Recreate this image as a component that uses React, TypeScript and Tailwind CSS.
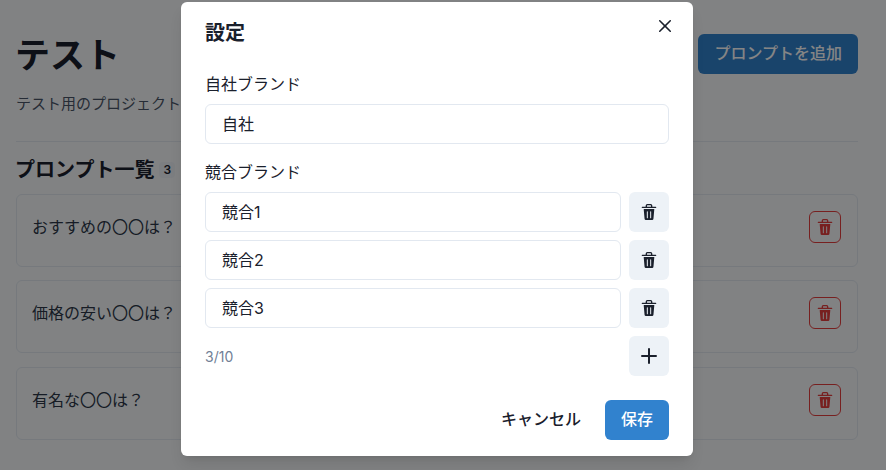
const font = "font-['Inter','Noto_Sans_CJK_JP',sans-serif]";

function DeleteIcon({ className }: { className?: string }) {
  return (
    <svg viewBox="0 0 24 24" className={className} fill="currentColor">
      <path d="M19.452 7.5H4.547a.5.5 0 00-.5.545l1.287 14.136A2 2 0 007.326 24h9.347a2 2 0 001.992-1.819L19.95 8.045a.5.5 0 00-.129-.382.5.5 0 00-.369-.163zm-9.2 13a.75.75 0 01-1.5 0v-9a.75.75 0 011.5 0zm5 0a.75.75 0 01-1.5 0v-9a.75.75 0 011.5 0zM22 4h-4.75a.25.25 0 01-.25-.25V2.5A2.5 2.5 0 0014.5 0h-5A2.5 2.5 0 007 2.5v1.25a.25.25 0 01-.25.25H2a1 1 0 000 2h20a1 1 0 000-2zM9 3.75V2.5a.5.5 0 01.5-.5h5a.5.5 0 01.5.5v1.25a.25.25 0 01-.25.25h-5.5A.25.25 0 019 3.75z" />
    </svg>
  );
}

function CloseIcon({ className }: { className?: string }) {
  return (
    <svg viewBox="0 0 24 24" className={className} fill="currentColor">
      <path d="M.439,21.44a1.5,1.5,0,0,0,2.122,2.121L11.823,14.3a.25.25,0,0,1,.354,0l9.262,9.263a1.5,1.5,0,1,0,2.122-2.121L14.3,12.177a.25.25,0,0,1,0-.354l9.263-9.262A1.5,1.5,0,0,0,21.439.44L12.177,9.7a.25.25,0,0,1-.354,0L2.561.44A1.5,1.5,0,0,0,.439,2.561L9.7,11.823a.25.25,0,0,1,0,.354Z" />
    </svg>
  );
}

function AddIcon({ className }: { className?: string }) {
  return (
    <svg viewBox="0 0 24 24" className={className} fill="currentColor">
      <path d="M0,12a1.5,1.5,0,0,0,1.5,1.5h8.75a.25.25,0,0,1,.25.25V22.5a1.5,1.5,0,0,0,3,0V13.75a.25.25,0,0,1,.25-.25H22.5a1.5,1.5,0,0,0,0-3H13.75a.25.25,0,0,1-.25-.25V1.5a1.5,1.5,0,0,0-3,0v8.75a.25.25,0,0,1-.25.25H1.5A1.5,1.5,0,0,0,0,12Z" />
    </svg>
  );
}

const prompts = ["おすすめの〇〇は？", "価格の安い〇〇は？", "有名な〇〇は？"];
const competitors = ["競合1", "競合2", "競合3"];

function TextInput({ value }: { value: string }) {
  return (
    <input
      readOnly
      value={value}
      className="h-10 w-full min-w-0 flex-1 rounded-md border border-[#e2e8f0] bg-white px-4 pb-[3px] text-base text-[#1a202c] outline-none"
    />
  );
}

function GrayIconButton({ children }: { children: React.ReactNode }) {
  return (
    <button className="flex h-10 w-10 shrink-0 items-center justify-center rounded-md bg-[#edf2f7] text-[#1a202c]">
      {children}
    </button>
  );
}

export default function App() {
  return (
    <div className={`${font} relative h-[470px] w-[886px] overflow-hidden bg-[#f7fafc] text-[#1a202c]`}>
      <div className="w-[874px] px-4 pt-[34px]">
        <div className="flex h-10 items-center justify-between">
          <h1 className="-ml-px pt-[3px] text-[35px] font-semibold">テスト</h1>
          <button className="h-10 rounded-md bg-[#3182ce] px-4 pb-[2px] text-base font-medium text-white">
            プロンプトを追加
          </button>
        </div>
        <p className="mt-[18px] text-[15px] leading-6 text-[#4a5568]">テスト用のプロジェクトです</p>
        <div className="mt-[25px] h-px bg-[#e2e8f0]" />
        <div className="mt-[13px] -ml-px flex items-center gap-[5px]">
          <h2 className="text-xl leading-[30px] font-semibold">プロンプト一覧</h2>
          <span className="rounded-sm bg-[#edf2f7] px-1 text-xs font-semibold">3</span>
        </div>
        <div className="mt-[9px] flex flex-col gap-[13.4px]">
          {prompts.map((p) => (
            <div key={p} className="rounded-md border border-[#e2e8f0] px-4 pt-4 pb-[23px]">
              <div className="flex h-8 items-center justify-between">
                <span className="-ml-px text-base text-[#2d3748]">{p}</span>
                <button className="flex h-8 w-8 items-center justify-center rounded-md border border-[#e53e3e] text-[#e53e3e]">
                  <DeleteIcon className="h-4 w-4" />
                </button>
              </div>
            </div>
          ))}
        </div>
      </div>

      <div className="absolute inset-y-0 left-0 w-[886px] bg-black/48">
        <div className="flex w-[874px] justify-center pt-[2px]">
          <div className="relative h-[454px] w-[512px] rounded-md bg-white shadow-lg">
            <button className="absolute top-2 right-3 flex h-8 w-8 items-center justify-center rounded-md text-[#1a202c]">
              <CloseIcon className="h-3 w-3" />
            </button>
            <h3 className="px-6 py-4 text-xl leading-[30px] font-semibold">設定</h3>
            <div className="flex flex-col px-6">
              <label className="mt-2 text-base leading-6">自社ブランド</label>
              <div className="mt-2 flex">
                <TextInput value="自社" />
              </div>
              <label className="mt-4 text-base leading-6">競合ブランド</label>
              <div className="mt-2 flex flex-col gap-2">
                {competitors.map((c) => (
                  <div key={c} className="flex gap-2">
                    <TextInput value={c} />
                    <GrayIconButton>
                      <DeleteIcon className="h-4 w-4" />
                    </GrayIconButton>
                  </div>
                ))}
                <div className="flex items-center justify-between">
                  <span className="pt-[2px] text-sm text-[#718096]">3/10</span>
                  <GrayIconButton>
                    <AddIcon className="h-4 w-4" />
                  </GrayIconButton>
                </div>
              </div>
            </div>
            <div className="mt-6 flex justify-end gap-2 px-6">
              <button className="h-10 rounded-md px-4 pb-[2px] text-base font-medium">キャンセル</button>
              <button className="h-10 rounded-md bg-[#3182ce] px-4 pb-[2px] text-base font-medium text-white">保存</button>
            </div>
          </div>
        </div>
      </div>
    </div>
  );
}
